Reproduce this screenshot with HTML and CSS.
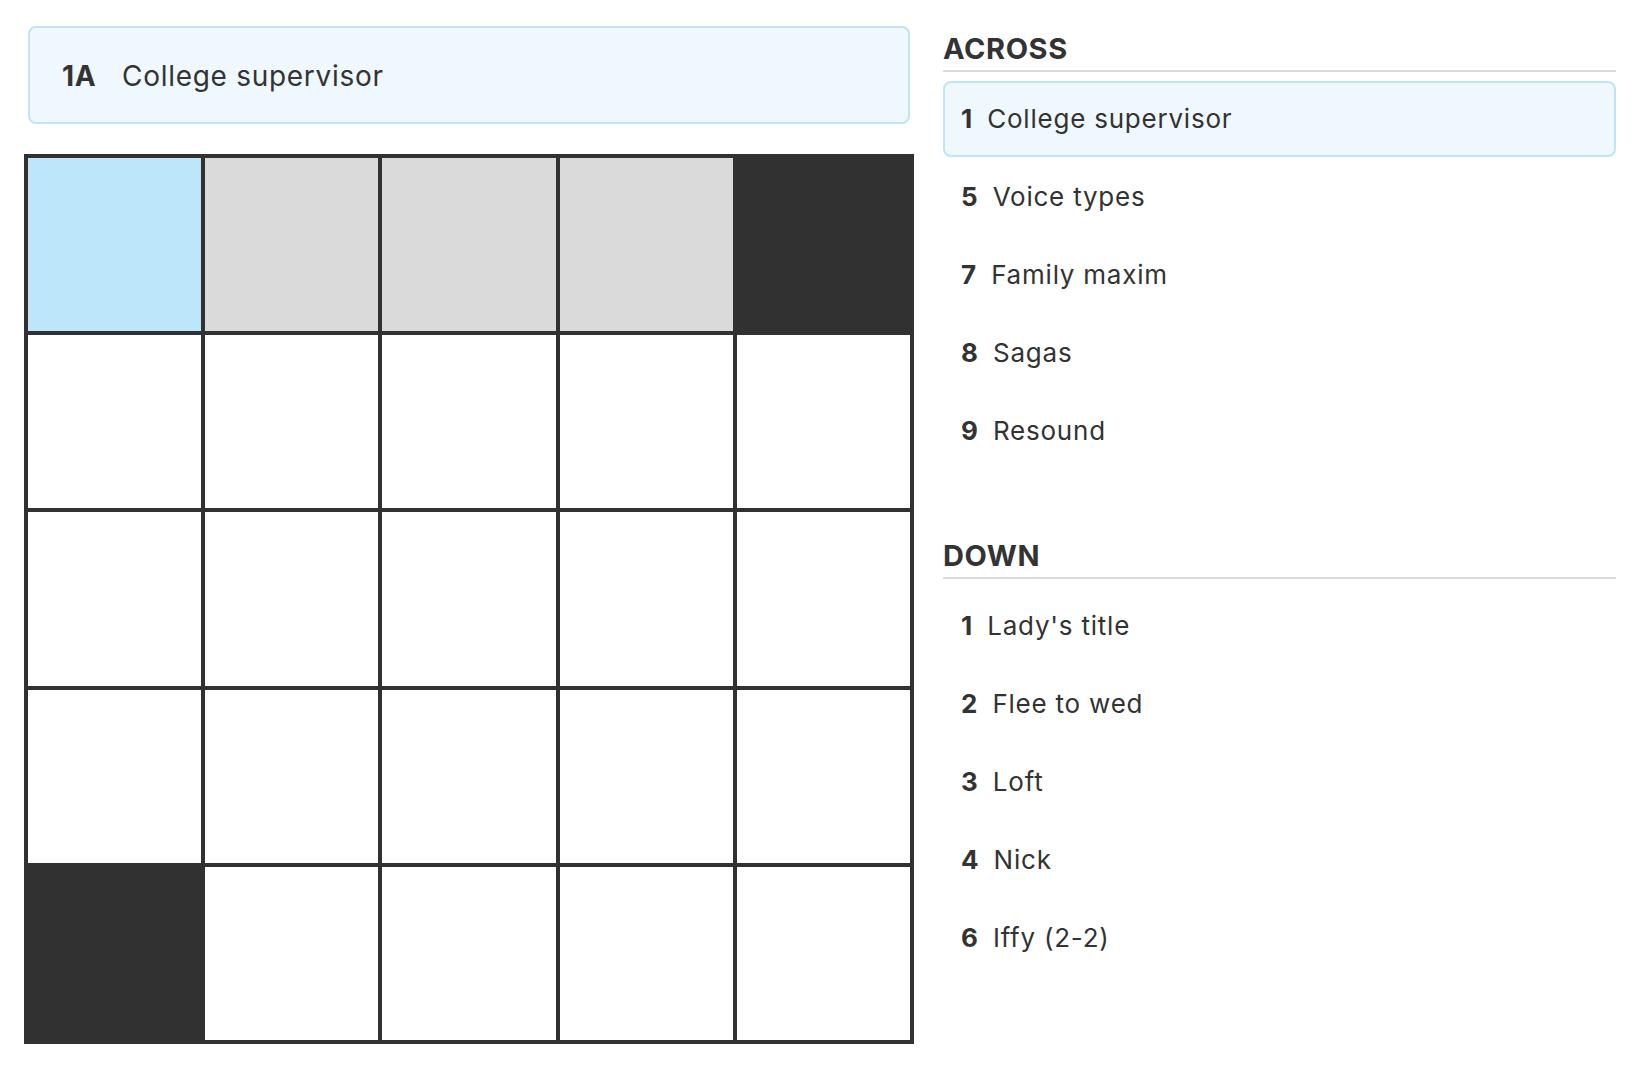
FILE: index.html
```html
<!DOCTYPE html>
<html lang="en">
<head>
<meta charset="utf-8">
<title>Crossword</title>
<link rel="stylesheet" href="styles.css">
</head>
<body>
<div class="page">
  <div class="board">
    <div class="clue-bar"><span class="clue-bar-num">1A</span><span class="clue-bar-text">College supervisor</span></div>
    <div class="grid">
      <div class="cell selected"></div>
      <div class="cell word"></div>
      <div class="cell word"></div>
      <div class="cell word"></div>
      <div class="cell block"></div>
      <div class="cell"></div>
      <div class="cell"></div>
      <div class="cell"></div>
      <div class="cell"></div>
      <div class="cell"></div>
      <div class="cell"></div>
      <div class="cell"></div>
      <div class="cell"></div>
      <div class="cell"></div>
      <div class="cell"></div>
      <div class="cell"></div>
      <div class="cell"></div>
      <div class="cell"></div>
      <div class="cell"></div>
      <div class="cell"></div>
      <div class="cell block"></div>
      <div class="cell"></div>
      <div class="cell"></div>
      <div class="cell"></div>
      <div class="cell"></div>
    </div>
  </div>
  <div class="clues">
    <section class="clue-section">
      <h2 class="clue-heading">ACROSS</h2>
      <ul class="clue-list">
        <li class="clue active"><span class="clue-num">1</span>College supervisor</li>
        <li class="clue"><span class="clue-num">5</span>Voice types</li>
        <li class="clue"><span class="clue-num">7</span>Family maxim</li>
        <li class="clue"><span class="clue-num">8</span>Sagas</li>
        <li class="clue"><span class="clue-num">9</span>Resound</li>
      </ul>
    </section>
    <section class="clue-section down">
      <h2 class="clue-heading">DOWN</h2>
      <ul class="clue-list">
        <li class="clue"><span class="clue-num">1</span>Lady's title</li>
        <li class="clue"><span class="clue-num">2</span>Flee to wed</li>
        <li class="clue"><span class="clue-num">3</span>Loft</li>
        <li class="clue"><span class="clue-num">4</span>Nick</li>
        <li class="clue"><span class="clue-num">6</span>Iffy (2-2)</li>
      </ul>
    </section>
  </div>
</div>
</body>
</html>
```
FILE: styles.css
```css
* { box-sizing: border-box; }
html, body { margin: 0; padding: 0; background: #ffffff; }
body {
  font-family: Inter, Lato, "Liberation Sans", sans-serif;
  color: #333333;
}
.page {
  display: flex;
  gap: 29px;
  padding: 0 22px 0 24px;
}
.board {
  width: 890px;
  flex: none;
  padding-top: 26px;
}
.clue-bar {
  height: 98px;
  margin: 0 4px 30px 4px;
  background: #eff8fe;
  border: 2px solid #bfe4f8;
  border-radius: 8px;
  padding: 32px 0 0 32px;
  font-size: 28px;
  line-height: 33px;
  letter-spacing: 0.025em;
  display: flex;
}
.clue-bar-num { font-weight: 700; margin-right: 26px; letter-spacing: 0.02em; }
.grid {
  width: 890px;
  height: 890px;
  border: 2px solid #313131;
  display: grid;
  grid-template-columns: repeat(5, 1fr);
  grid-template-rows: repeat(5, 1fr);
}
.cell {
  border: 2px solid #313131;
  background: #ffffff;
}
.cell.selected { background: #bee6fb; }
.cell.word { background: #dadada; }
.cell.block { background: #313131; }
.clues {
  flex: 1;
  padding-top: 31px;
}
.clue-heading {
  margin: 0;
  font-size: 29px;
  font-weight: 700;
  line-height: 36px;
  letter-spacing: 0.02em;
  padding-bottom: 3px;
  border-bottom: 2px solid #d9d9d9;
}
.clue-section.down { margin-top: 69px; }
.clue-list {
  list-style: none;
  margin: 9px 0 0 0;
  padding: 0;
}
.clue {
  height: 76px;
  margin-bottom: 2px;
  padding: 18px 16px 0 16px;
  border: 2px solid transparent;
  border-radius: 8px;
  font-size: 26px;
  line-height: 36px;
  letter-spacing: 0.03em;
}
.clue.active {
  background: #eff8fe;
  border-color: #bfe4f8;
}
.clue-num { font-weight: 700; margin-right: 15px; letter-spacing: 0; }
```
